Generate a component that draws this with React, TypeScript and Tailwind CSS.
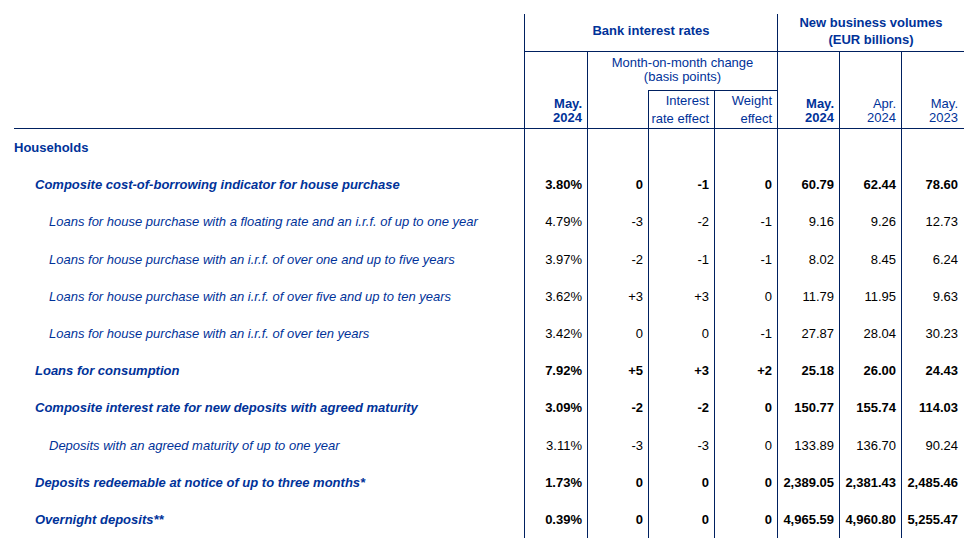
import React from "react";

type Row = {
  label: string;
  level: 0 | 1 | 2;
  values?: string[];
};

const rows: Row[] = [
  { label: "Households", level: 0 },
  {
    label: "Composite cost-of-borrowing indicator for house purchase",
    level: 1,
    values: ["3.80%", "0", "-1", "0", "60.79", "62.44", "78.60"],
  },
  {
    label: "Loans for house purchase with a floating rate and an i.r.f. of up to one year",
    level: 2,
    values: ["4.79%", "-3", "-2", "-1", "9.16", "9.26", "12.73"],
  },
  {
    label: "Loans for house purchase with an i.r.f. of over one and up to five years",
    level: 2,
    values: ["3.97%", "-2", "-1", "-1", "8.02", "8.45", "6.24"],
  },
  {
    label: "Loans for house purchase with an i.r.f. of over five and up to ten years",
    level: 2,
    values: ["3.62%", "+3", "+3", "0", "11.79", "11.95", "9.63"],
  },
  {
    label: "Loans for house purchase with an i.r.f. of over ten years",
    level: 2,
    values: ["3.42%", "0", "0", "-1", "27.87", "28.04", "30.23"],
  },
  {
    label: "Loans for consumption",
    level: 1,
    values: ["7.92%", "+5", "+3", "+2", "25.18", "26.00", "24.43"],
  },
  {
    label: "Composite interest rate for new deposits with agreed maturity",
    level: 1,
    values: ["3.09%", "-2", "-2", "0", "150.77", "155.74", "114.03"],
  },
  {
    label: "Deposits with an agreed maturity of up to one year",
    level: 2,
    values: ["3.11%", "-3", "-3", "0", "133.89", "136.70", "90.24"],
  },
  {
    label: "Deposits redeemable at notice of up to three months*",
    level: 1,
    values: ["1.73%", "0", "0", "0", "2,389.05", "2,381.43", "2,485.46"],
  },
  {
    label: "Overnight deposits**",
    level: 1,
    values: ["0.39%", "0", "0", "0", "4,965.59", "4,960.80", "5,255.47"],
  },
];

const cols = "grid grid-cols-[510px_63px_61px_66px_63px_62px_62px_63px]";

export default function App() {
  return (
    <div className="bg-white pt-[14px] pl-[14px] font-['Liberation_Sans',Arial,sans-serif] text-[13px] text-[#003299] w-[965px] h-[539px] overflow-hidden">
      {/* Header */}
      <div className={`${cols} grid-rows-[38px_38px_39px]`}>
        <div className="col-start-1 row-start-1 row-span-3 border-b border-[#002060]" />
        <div className="col-start-2 col-span-4 row-start-1 border-l border-b border-[#002060] text-center font-bold leading-[15px] pt-[9px]">
          Bank interest rates
        </div>
        <div className="col-start-6 col-span-3 row-start-1 border-l border-b border-[#002060] text-center font-bold leading-[17px]">
          New business volumes
          <br />
          (EUR billions)
        </div>

        <div className="col-start-2 row-start-2 row-span-2 border-l border-b border-[#002060] flex flex-col items-end justify-end pr-[5px] pb-[3px] font-bold leading-[14px]">
          <span>May.</span>
          <span>2024</span>
        </div>
        <div className="col-start-3 col-span-3 row-start-2 border-l border-[#002060] text-center leading-[14px] pt-[4px]">
          Month-on-month change
          <br />
          (basis points)
        </div>
        <div className="col-start-3 row-start-3 border-l border-b border-[#002060]" />
        <div className="col-start-4 row-start-3 border-l border-t border-b border-[#002060] flex flex-col items-end justify-end pr-[5px] leading-[18px]">
          <span>Interest</span>
          <span>rate effect</span>
        </div>
        <div className="col-start-5 row-start-3 border-l border-t border-b border-[#002060] flex flex-col items-end justify-end pr-[5px] leading-[18px]">
          <span>Weight</span>
          <span>effect</span>
        </div>

        <div className="col-start-6 row-start-2 row-span-2 border-l border-b border-[#002060] flex flex-col items-end justify-end pr-[5px] pb-[3px] font-bold leading-[14px]">
          <span>May.</span>
          <span>2024</span>
        </div>
        <div className="col-start-7 row-start-2 row-span-2 border-l border-b border-[#002060] flex flex-col items-end justify-end pr-[5px] pb-[3px] leading-[14px]">
          <span>Apr.</span>
          <span>2024</span>
        </div>
        <div className="col-start-8 row-start-2 row-span-2 border-l border-b border-[#002060] flex flex-col items-end justify-end pr-[6px] pb-[3px] leading-[14px]">
          <span>May.</span>
          <span>2023</span>
        </div>
      </div>

      {/* Body */}
      {rows.map((r, i) => {
        const bold = r.level < 2;
        const labelCls =
          r.level === 0
            ? "font-bold"
            : r.level === 1
            ? "font-bold italic pl-[21px]"
            : "italic pl-[35px]";
        const vals = r.values ?? ["", "", "", "", "", "", ""];
        return (
          <div key={i} className={`${cols} h-[37.2px]`}>
            <div className={`flex items-center leading-[15px] ${labelCls}`}>{r.label}</div>
            {vals.map((v, j) => (
              <div
                key={j}
                className={`border-l border-[#002060] flex items-center justify-end leading-[15px] text-black ${
                  j === 6 ? "pr-[6px]" : "pr-[5px]"
                } ${bold ? "font-bold" : ""}`}
              >
                {v}
              </div>
            ))}
          </div>
        );
      })}
    </div>
  );
}
